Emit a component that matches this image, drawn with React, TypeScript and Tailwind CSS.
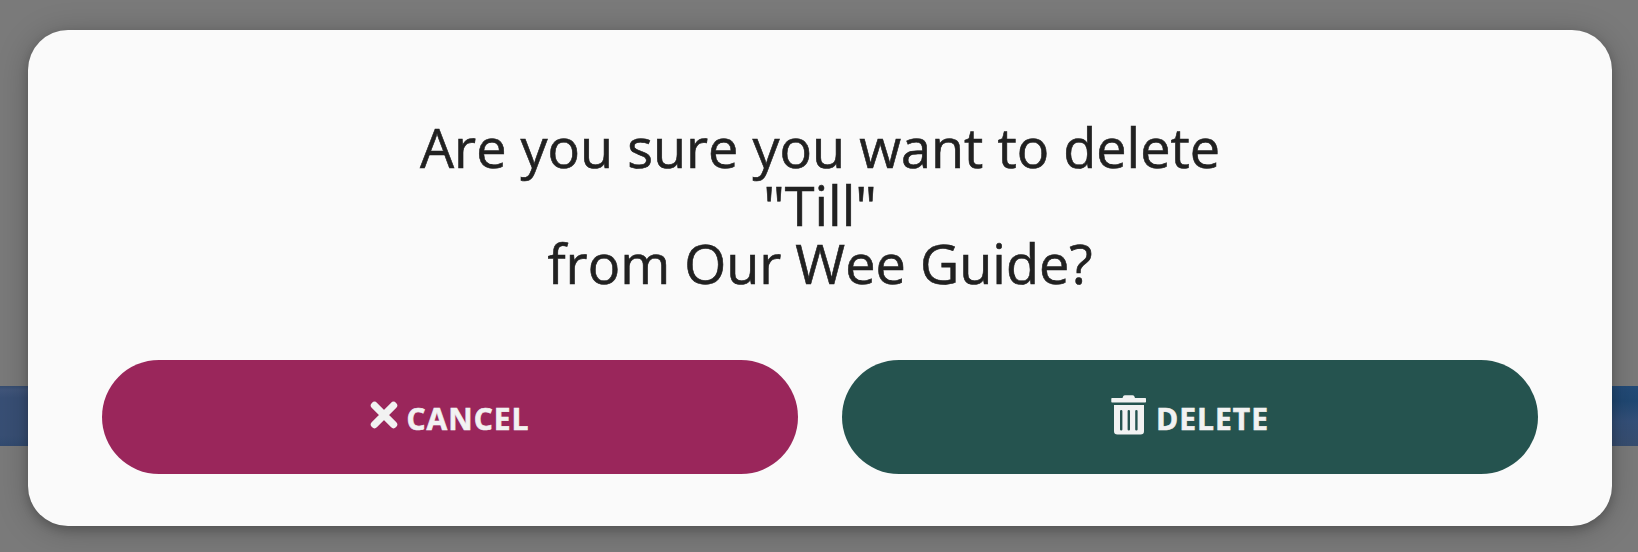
export default function App() {
  return (
    <div className="relative h-[552px] w-[1638px] overflow-hidden bg-[#7a7a7a] font-['Open_Sans',sans-serif]">
      <div className="absolute top-[386px] left-0 h-[60px] w-[50px] bg-[linear-gradient(#364d70,#40557a_4px,#384f75_12px,#384f74_50px,#334b70)]" />
      <div className="absolute top-[386px] right-0 h-[60px] w-[50px] bg-[linear-gradient(#234b78,#204873_15px,#345079_35px,#384e70)]" />
      <div className="relative flex h-full pt-[30px] pr-[26px] pb-[26px] pl-[28px]">
        <section className="flex w-full flex-col rounded-[40px] bg-[#fafafa] px-[74px] pt-[88px] shadow-[0_4px_10px_rgba(0,0,0,0.2),0_4px_32px_rgba(0,0,0,0.22)]">
          <h1 className="text-center text-[54px] leading-[58px] font-normal text-[#212121] [-webkit-text-stroke:0.6px_#212121]">
            Are you sure you want to delete
            <br />
            "Till"
            <br />
            from Our Wee Guide?
          </h1>
          <div className="mt-[68px] flex gap-[44px] text-[30px] leading-[40px] font-bold tracking-[1px] text-[#f2f2f2]">
            <button className="flex h-[114px] w-[696px] items-center justify-center gap-[8px] rounded-[57px] bg-[#9a265b]">
              <svg className="-mt-[4px] h-[28px] w-[28px]" viewBox="0 0 28 28" fill="none" stroke="currentColor" strokeWidth="7.4" strokeLinecap="round">
                <path d="M4.5 4.5L23.500 23.500M23.500 4.500L4.500 23.500" />
              </svg>
              <span className="mt-[4px] [-webkit-text-stroke:0.6px_#f2f2f2]">CANCEL</span>
            </button>
            <button className="flex h-[114px] w-[696px] items-center justify-center gap-[10px] rounded-[57px] bg-[#25534f]">
              <svg className="-mt-[4px] h-[40px] w-[35px]" viewBox="0 0 35 40" fill="currentColor">
                <path d="M1 3h10.5l.7-1.8Q12.7.3 14 .3h7.500q1.300 0 1.800.9L24 3h10.300q.700 0 .700.700v3q0 .700-.700.700H1q-.700 0-.700-.700v-3Q.300 3 1 3Z" />
                <path fillRule="evenodd" d="M3 10h30v26.200q0 3.300-3.500 3.300h-23Q3 39.500 3 36.200ZM9 16v18.500q0 1 1.200 1t1.200-1V16q0-1-1.200-1T9 16Zm7.600 0v18.500q0 1 1.200 1t1.200-1V16q0-1-1.200-1t-1.200 1Zm7.600 0v18.500q0 1 1.200 1t1.200-1V16q0-1-1.200-1t-1.200 1Z" />
              </svg>
              <span className="mt-[4px] [-webkit-text-stroke:0.6px_#f2f2f2]">DELETE</span>
            </button>
          </div>
        </section>
      </div>
    </div>
  );
}
